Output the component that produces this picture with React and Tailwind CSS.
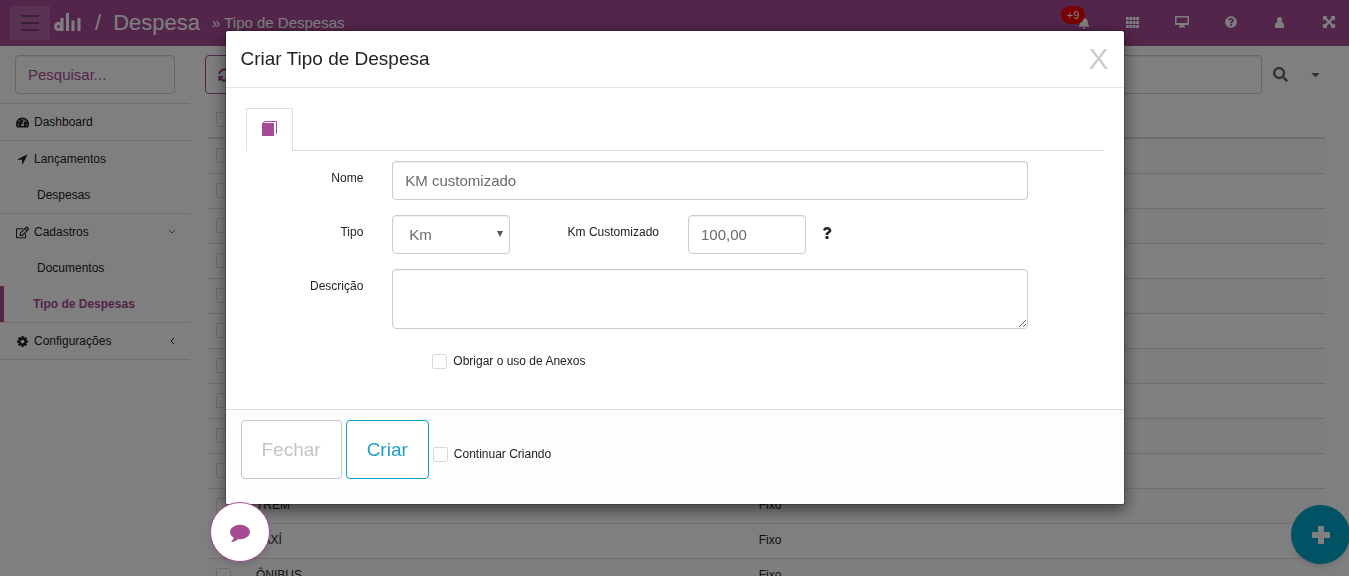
import React, { useState } from 'react';
import { FaTachometerAlt, FaRegEdit, FaSearch, FaCaretDown, FaQuestion, FaSyncAlt, FaBell } from 'react-icons/fa';

const FIELD = "rounded border border-[#ccc] bg-white text-[15px] text-[#6b6b6b] shadow-[inset_0_1px_1px_rgba(0,0,0,0.075)] outline-none";
const CHECK = "size-[15px] shrink-0 appearance-none rounded-[2px] border border-[#d9d9d9] bg-white checked:bg-[#a64b96]";
const LABEL = "col-span-2 pt-[9px] pr-[14px] text-right";

const ArrowIcon = () => (
    <svg width="13" height="12" viewBox="0 0 1792 1792" fill="currentColor">
        <path d="M1593 349l-640 1280q-17 35-57 35-5 0-15-2-22-5-35.500-22.500t-13.500-39.500v-576h-576q-22 0-39.500-13.500t-22.500-35.500 4-42 29-30l1280-640q13-7 29-7 27 0 45 19 15 14 18.500 34.500t-6.500 39.500z" />
    </svg>
);

const CogIcon = () => (
    <svg width="13" height="13" viewBox="0 0 1792 1792" fill="currentColor">
        <path d="M1152 896q0-106-75-181t-181-75-181 75-75 181 75 181 181 75 181-75 75-181zm512-109v222q0 12-8 23t-20 13l-185 28q-19 54-39 91 35 50 107 138 10 12 10 25t-9 23q-27 37-99 108t-94 71q-12 0-26-9l-138-108q-44 23-91 38-16 136-29 186-7 28-36 28h-222q-14 0-24.500-8.500t-11.500-21.500l-28-184q-49-16-90-37l-141 107q-10 9-25 9-14 0-25-11-126-114-165-168-7-10-7-23 0-12 8-23 15-21 51-66.500t54-70.500q-27-50-41-99l-183-27q-13-2-21-12.500t-8-23.500v-222q0-12 8-23t19-13l186-28q14-46 39-92-40-57-107-138-10-12-10-24 0-10 9-23 26-36 98.500-107.500t94.500-71.500q13 0 26 10l138 107q44-23 91-38 16-136 29-186 7-28 36-28h222q14 0 24.500 8.500t11.500 21.500l28 184q49 16 90 37l142-107q9-9 24-9 13 0 25 10 129 119 165 170 7 8 7 22 0 12-8 23-15 21-51 66.500t-54 70.500q26 50 41 98l183 28q13 2 21 12.500t8 23.500z" />
    </svg>
);

const CommentIcon = () => (
    <svg width="20" height="20" viewBox="0 0 1792 1792" fill="currentColor">
        <path d="M1792 896q0 174-120 321.500t-326 233-450 85.500q-70 0-145-8-198 175-460 242-49 14-114 22h-5q-15 0-27-10.500t-16-27.500v-1q-3-4-.5-12t2-10 4.500-9.500l6-9 7-8.500 8-9q7-8 31-34.500t34.500-38 31-39.500 32.500-51 27-59 26-76q-157-89-247.500-220t-90.500-281q0-174 120-321.500t326-233 450-85.500 450 85.500 326 233 120 321.500z" />
    </svg>
);

const ChevronDown = () => (
    <svg width="8" height="8" viewBox="0 0 8 8" fill="none" stroke="#467083"><path d="M1 2l3 3 3-3" /></svg>
);

const ChevronLeft = () => (
    <svg width="8" height="8" viewBox="0 0 8 8" fill="none" stroke="currentColor"><path d="M6 1L3 4l3 3" /></svg>
);

const PlusIcon = () => (
    <svg width="18" height="18" viewBox="0 0 18 18" fill="currentColor"><path d="M6 0h6v6h6v6h-6v6H6v-6H0V6h6z" /></svg>
);

const Logo = () => (
    <svg width="27" height="20" viewBox="0 0 27 20" fill="none" stroke="currentColor" strokeWidth="3" aria-label="Logo">
        <circle cx="4.500" cy="14.500" r="3" />
        <path d="M8 6v13M13.500 1v18M19 8.500V19M25 6v13" />
    </svg>
);

const GridIcon = () => (
    <svg width="13" height="11" viewBox="0 0 13 11" fill="currentColor">
        {[0, 4, 8].map(y => [0, 3.4, 6.8, 10.2].map(x => <rect key={`${x}-${y}`} x={x} y={y} width="2.7" height="3" />))}
    </svg>
);

const MonitorIcon = () => (
    <svg width="14" height="12" viewBox="0 0 14 12" fill="currentColor">
        <path fillRule="evenodd" d="M1 0h12a1 1 0 0 1 1 1v7a1 1 0 0 1-1 1H9l1 1.500v1H4v-1L5 9H1a1 1 0 0 1-1-1V1a1 1 0 0 1 1-1zm.5 1.500v5.500h11V1.500z" />
    </svg>
);

const HelpIcon = () => (
    <svg width="12" height="12" viewBox="0 0 512 512" fill="currentColor">
        <path d="M504 256c0 137-111 248-248 248S8 393 8 256 119 8 256 8s248 111 248 248zM263 90c-55 0-90 23-117 64-4 5-3 13 3 17l34 26c6 4 13 3 17-2 18-23 30-36 57-36 20 0 45 13 45 33 0 15-12 22-32 33-23 13-54 30-54 71v6c0 7 5 12 12 12h56c7 0 12-5 12-12v-1c0-28 83-30 83-107 0-58-60-104-116-104zm-7 248c-25 0-46 21-46 46s21 46 46 46 46-21 46-46-21-46-46-46z" />
    </svg>
);

const UserIcon = () => (
    <svg width="9" height="11" viewBox="0 0 9 11" fill="currentColor">
        <path d="M4.500 0C6 0 7 1 7 2.600c0 1-.3 1.700-.8 2.200C8 5.300 9 6.300 9 8v2q0 1-1 1H1q-1 0-1-1V8c0-1.700 1-2.700 2.800-3.200C2.300 4.300 2 3.600 2 2.600 2 1 3 0 4.500 0z" />
    </svg>
);

const ExpandIcon = () => (
    <svg width="12" height="12" viewBox="0 0 12 12" fill="currentColor">
        <path d="M0 0h4.500L3.200 1.300 6 4.400l2.800-3.100L7.500 0H12v4.500l-1.300-1.300L7.600 6l3.100 2.800L12 7.500V12H7.500l1.300-1.300L6 7.600l-2.800 3.100L4.500 12H0V7.500l1.300 1.300L4.400 6 1.300 3.200 0 4.500z" />
    </svg>
);

const BookIcon = () => (
    <svg width="15" height="15" viewBox="0 0 15 15">
        <path d="M2.500.5h12v12" fill="none" stroke="#a64b96" />
        <path d="M0 2.500L2.500 0v2H12v13H0z" fill="#a64b96" />
    </svg>
);

const menu = [
    { label: "Dashboard", icon: FaTachometerAlt, children: [] },
    { label: "Lançamentos", icon: ArrowIcon, children: ["Despesas"] },
    { label: "Cadastros", icon: FaRegEdit, arrow: ChevronDown, children: ["Documentos", "Tipo de Despesas"] },
    { label: "Configurações", icon: CogIcon, arrow: ChevronLeft, children: [] },
];

// ten rows without data yet, then the loaded ones
const rows = [
    ...Array.from({ length: 10 }, () => ({ nome: "", tipo: "" })),
    { nome: "TREM", tipo: "Fixo" },
    { nome: "TAXÍ", tipo: "Fixo" },
    { nome: "ÔNIBUS", tipo: "Fixo" },
];

const Header = () => (
    <header className="flex h-[46px] shrink-0 items-center bg-[#a64b96] text-white">
        <button type="button" aria-label="Menu" className="ml-[10px] flex h-[34px] w-10 flex-col items-center justify-center gap-[5px] bg-white/15 text-[#70406a]">
            <span className="h-[2px] w-[18px] bg-current" />
            <span className="h-[2px] w-[18px] bg-current" />
            <span className="h-[2px] w-[18px] bg-current" />
        </button>
        <a href="#" className="ml-1 flex items-center pb-[2px] text-[22px]">
            <Logo />
            <span className="ml-[14px]">/</span>
            <span className="ml-3">Despesa</span>
        </a>
        <span className="ml-3 text-[15px]">» Tipo de Despesas</span>
        <nav className="ml-auto flex items-center pb-[2px]">
            <button type="button" aria-label="Notificações" className="relative flex w-[49px] justify-center">
                <FaBell size={12} className="mt-[2px]" />
                <span className="absolute -top-[9px] left-[2px] flex h-[18px] w-6 items-center justify-center rounded-full bg-[#f00000] text-[11px]">+9</span>
            </button>
            <button type="button" aria-label="Módulos" className="flex w-[49px] items-center justify-center"><GridIcon /></button>
            <button type="button" aria-label="Tela" className="flex w-[49px] items-center justify-center"><MonitorIcon /></button>
            <button type="button" aria-label="Ajuda" className="flex w-[49px] items-center justify-center"><HelpIcon /></button>
            <button type="button" aria-label="Usuário" className="flex w-[49px] items-center justify-center"><UserIcon /></button>
            <button type="button" aria-label="Tela cheia" className="flex w-[45px] items-center justify-center pl-1"><ExpandIcon /></button>
        </nav>
    </header>
);

const Sidebar = () => (
    <aside className="w-[190px] shrink-0 text-xs">
        <div className="px-[15px] py-[9px]">
            <input type="search" aria-label="Pesquisar" placeholder="Pesquisar..." className={`${FIELD} h-[39px] w-full px-3 placeholder:text-[#a64b96]`} />
        </div>
        <ul className="border-b border-[#ddd]">
            {menu.map(({ label, icon: Icon, arrow: Arrow, children }) => (
                <li key={label} className="border-t border-[#ddd]">
                    <a href="#" className="flex h-9 items-center pr-[14px] pl-4">
                        <span className="flex w-[18px]"><Icon size={13} /></span>
                        {label}
                        {Arrow && <span className="ml-auto"><Arrow /></span>}
                    </a>
                    {children.map(child => (
                        <a
                            key={child}
                            href="#"
                            className={child === "Tipo de Despesas"
                                ? "flex h-9 items-center border-l-4 border-[#a64b96] pl-[29px] font-bold text-[#a64b96]"
                                : "flex h-9 items-center pl-[37px]"}
                        >
                            {child}
                        </a>
                    ))}
                </li>
            ))}
        </ul>
    </aside>
);

const ExpenseTypes = () => (
    <main className="min-w-0 flex-1 pt-[9px] pr-6 pl-[15px]">
        <div className="flex items-center">
            <button type="button" aria-label="Atualizar" className="flex h-[39px] w-10 shrink-0 items-center justify-center rounded border border-[#a64b96] text-[#a64b96]">
                <FaSyncAlt size={14} />
            </button>
            <input type="text" aria-label="Filtro" className={`${FIELD} ml-2 h-[39px] min-w-0 flex-1 px-3`} />
            <button type="button" aria-label="Buscar" className="ml-[11px] text-[#666]"><FaSearch size={15} /></button>
            <button type="button" aria-label="Mais filtros" className="mr-[3px] ml-[21px] text-[#666]"><FaCaretDown size={13} /></button>
        </div>
        <table className="mt-2 ml-[3px] w-[calc(100%-3px)] table-fixed border-collapse text-left text-xs">
            <thead>
                <tr className="h-9 border-b-2 border-[#ddd]">
                    <th className="w-12 pl-2"><input type="checkbox" aria-label="Selecionar todos" className={`${CHECK} block`} /></th>
                    <th aria-label="Nome" className="w-[45%]" />
                    <th aria-label="Tipo" />
                </tr>
            </thead>
            <tbody>
                {rows.map((row, i) => (
                    <tr key={i} className="h-[35px] border-b border-[#ddd] odd:bg-[#fdfdfd]">
                        <td className="pl-2"><input type="checkbox" aria-label={`Selecionar linha ${i + 1}`} className={`${CHECK} block`} /></td>
                        <td className="pb-[2px]">{row.nome}</td>
                        <td className="pb-[2px]">{row.tipo}</td>
                    </tr>
                ))}
            </tbody>
        </table>
    </main>
);

const CreateModal = ({ onClose }) => {
    const [form, setForm] = useState({ nome: "KM customizado", tipo: "km", valor: "100,00", descricao: "" });
    const update = (e) => setForm({ ...form, [e.target.name]: e.target.value });

    return (
        <div role="dialog" aria-modal="true" aria-labelledby="modal-title" className="mx-auto mt-[30px] w-full max-w-[900px] overflow-hidden rounded-[3px] border border-black/20 bg-white bg-clip-padding text-xs shadow-[0_5px_15px_rgba(0,0,0,0.5)]">
            <div className="flex h-[57px] items-center justify-between border-b border-[#e5e5e5] px-[15px]">
                <h4 id="modal-title" className="text-[19px] text-[#222]">Criar Tipo de Despesa</h4>
                <button type="button" aria-label="Fechar janela" onClick={onClose} className="text-[30px] leading-none text-[#ccc]">X</button>
            </div>
            <form onSubmit={(e) => e.preventDefault()}>
                <div className="px-5 pt-5 pb-10">
                    <div role="tablist" className="flex border-b border-[#ddd]">
                        <button type="button" role="tab" aria-label="Dados" aria-selected="true" className="-mb-px flex h-[43px] w-[47px] items-center justify-center border border-b-0 border-[#ddd] bg-white pb-[3px]">
                            <BookIcon />
                        </button>
                    </div>
                    <div className="-mr-[13px] -ml-4 mt-[10px] grid grid-cols-12 gap-y-[15px]">
                        <label htmlFor="nome" className={LABEL}>Nome</label>
                        <div className="col-span-9 px-[15px]">
                            <input id="nome" name="nome" value={form.nome} onChange={update} className={`${FIELD} h-[39px] w-full px-3`} />
                        </div>
                        <label htmlFor="tipo" className={`${LABEL} col-start-1`}>Tipo</label>
                        <div className="relative col-span-2 mx-[15px]">
                            <select id="tipo" name="tipo" value={form.tipo} onChange={update} className={`${FIELD} h-[39px] w-full appearance-none px-4`}>
                                <option value="km">Km</option>
                            </select>
                            <svg width="6" height="6" viewBox="0 0 6 6" fill="#555" className="pointer-events-none absolute top-4 right-[7px]"><path d="M0 0h6L3 6z" /></svg>
                        </div>
                        <label htmlFor="valor" className={LABEL}>Km Customizado</label>
                        <div className="col-span-2 px-[15px]">
                            <input id="valor" name="valor" value={form.valor} onChange={update} className={`${FIELD} h-[39px] w-full px-3`} />
                        </div>
                        <div className="pt-3"><FaQuestion size={12} /></div>
                        <label htmlFor="descricao" className={`${LABEL} col-start-1`}>Descrição</label>
                        <div className="col-span-9 px-[15px]">
                            <textarea id="descricao" name="descricao" value={form.descricao} onChange={update} className={`${FIELD} block h-[60px] w-full resize-y px-3 py-2`} />
                        </div>
                        <label className="col-span-9 col-start-3 mt-[9px] flex items-center gap-[6px] pl-[55px]">
                            <input type="checkbox" className={CHECK} />
                            Obrigar o uso de Anexos
                        </label>
                    </div>
                </div>
                <div className="flex items-center gap-1 border-t border-[#ddd] bg-[#fdfdfd] px-[15px] pt-[10px] pb-[25px]">
                    <button type="button" onClick={onClose} className="h-[59px] rounded border border-[#c8c8cc] bg-white px-5 text-[19px] text-[#c4c4c8]">Fechar</button>
                    <button type="submit" className="h-[59px] rounded border border-[#0a9ec4] bg-white px-5 text-[19px] text-[#1f9fc6]">Criar</button>
                    <label className="flex items-center gap-[6px] pt-[9px]">
                        <input type="checkbox" className={CHECK} />
                        Continuar Criando
                    </label>
                </div>
            </form>
        </div>
    );
};

export default function App() {
    const [open, setOpen] = useState(true);

    return (
        <div className="flex h-screen flex-col overflow-hidden bg-white font-['Liberation_Sans',Arial,sans-serif] text-[#222]">
            <Header />
            <div className="flex min-h-0 flex-1">
                <Sidebar />
                <ExpenseTypes />
            </div>
            <button type="button" aria-label="Adicionar" onClick={() => setOpen(true)} className="fixed right-[-1px] bottom-3 flex size-[59px] items-center justify-center rounded-full bg-[#00a5c9] text-white shadow-md">
                <PlusIcon />
            </button>
            {open && (
                <div className="fixed inset-0 overflow-hidden bg-black/50">
                    <CreateModal onClose={() => setOpen(false)} />
                </div>
            )}
            <button type="button" aria-label="Chat" className="fixed bottom-[14px] left-[210px] flex size-[60px] items-center justify-center rounded-full border border-[#a64b96] bg-white text-[#a64b96] shadow-md">
                <CommentIcon />
            </button>
        </div>
    );
}
